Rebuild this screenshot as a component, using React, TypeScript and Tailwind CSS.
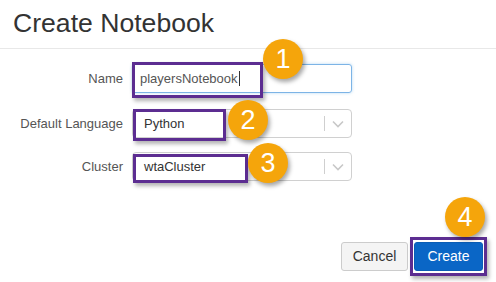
import React from "react";

function Chevron() {
  return (
    <svg width="12" height="8" viewBox="0 0 12 8" className="block">
      <polyline points="1,1.5 6,6.5 11,1.5" fill="none" stroke="#c8c8c8" strokeWidth="1.6" />
    </svg>
  );
}

function Select({ value }: { value: string }) {
  return (
    <div className="w-[220px] h-[29px] border border-[#d0d0d0] rounded-[4px] flex items-center bg-white">
      <span className="flex-1 pl-[11px] text-[13px] text-[#333]">{value}</span>
      <span className="w-px h-[15px] bg-[#cfcfcf]" />
      <span className="w-[26px] flex justify-center">
        <Chevron />
      </span>
    </div>
  );
}

function Badge({ n, cls }: { n: string; cls: string }) {
  return (
    <div
      className={`absolute w-[40px] h-[40px] rounded-full bg-[#f5a50b] shadow-[2px_3px_4px_rgba(0,0,0,0.35)] flex items-center justify-center text-white text-[27px] leading-none ${cls}`}
    >
      {n}
    </div>
  );
}

function Box({ cls }: { cls: string }) {
  return (
    <div
      className={`absolute border-[3px] border-[#5c2d91] shadow-[2px_3px_4px_rgba(0,0,0,0.3)] ${cls}`}
    />
  );
}

export default function App() {
  return (
    <div className="relative w-[496px] h-[282px] bg-white overflow-hidden font-['Liberation_Sans',Arial,sans-serif]">
      <div className="h-[49px] border-b border-[#e8e8e8] pl-[13px] pt-[10px] text-[26.6px] leading-none text-[#333]">
        Create Notebook
      </div>

      <div className="mt-[15px] flex flex-col">
        <div className="flex items-center h-[29px]">
          <div className="w-[123px] text-right text-[13px] text-[#555]">Name</div>
          <div className="ml-[9px] w-[220px] h-[29px] border border-[#7db4e6] rounded-[3px] shadow-[0_0_3px_rgba(102,175,233,0.5)] flex items-center pl-[7px] text-[13px] text-[#555]">
            <span>playersNotebook</span>
            <span className="w-px h-[15px] bg-[#333] ml-px" />
          </div>
        </div>
        <div className="flex items-center h-[29px] mt-[16px]">
          <div className="w-[123px] text-right text-[13px] text-[#555]">Default Language</div>
          <div className="ml-[9px]">
            <Select value="Python" />
          </div>
        </div>
        <div className="flex items-center h-[29px] mt-[14px]">
          <div className="w-[123px] text-right text-[13px] text-[#555]">Cluster</div>
          <div className="ml-[9px]">
            <Select value="wtaCluster" />
          </div>
        </div>
      </div>

      <div className="mt-[61px] flex justify-end pr-[13px] gap-[6px]">
        <button className="w-[67px] h-[29px] bg-[#f4f4f4] border border-[#ccc] rounded-[3px] text-[14px] text-[#333]">
          Cancel
        </button>
        <button className="w-[69px] h-[29px] bg-[#0a66c6] border border-[#0a5db5] rounded-[3px] text-[14px] text-white">
          Create
        </button>
      </div>

      <Box cls="left-[132px] top-[62px] w-[131px] h-[36px]" />
      <Box cls="left-[133px] top-[109px] w-[93px] h-[32px]" />
      <Box cls="left-[133px] top-[154px] w-[115px] h-[29px]" />
      <Box cls="left-[410px] top-[237px] w-[77px] h-[39px]" />

      <Badge n="1" cls="left-[263px] top-[39px]" />
      <Badge n="2" cls="left-[228px] top-[100px]" />
      <Badge n="3" cls="left-[248px] top-[143px]" />
      <Badge n="4" cls="left-[445px] top-[197px]" />
    </div>
  );
}
